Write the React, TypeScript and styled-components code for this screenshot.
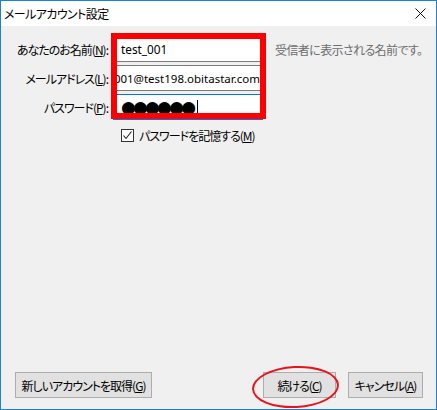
import React from "react";
import styled, { createGlobalStyle } from "styled-components";

const Global = createGlobalStyle`
  html, body { margin: 0; padding: 0; background: #ffffff; }
  * { box-sizing: border-box; }
`;

const jp = `"Noto Sans CJK JP", "Noto Sans", sans-serif`;

const Window = styled.div`
  width: 437px;
  height: 410px;
  border: 1px solid #1883d7;
  display: flex;
  flex-direction: column;
  font-family: ${jp};
  font-feature-settings: "palt";
  font-size: 12px;
  letter-spacing: -1px;
  color: #000;
`;

const TitleBar = styled.div`
  height: 25px;
  background: #ffffff;
  display: flex;
  align-items: center;
  justify-content: space-between;
  padding: 0 10px 1px 3px;
`;

const Title = styled.span`
  font-size: 12px;
  letter-spacing: -0.6px;
`;

const Body = styled.div`
  flex: 1;
  background: #f0f0f0;
  position: relative;
  display: flex;
  flex-direction: column;
`;

const Form = styled.div`
  display: grid;
  grid-template-columns: 112px 150px 1fr;
  grid-auto-rows: 26px;
  row-gap: 3px;
  padding-top: 10px;
`;

const Label = styled.div`
  display: flex;
  align-items: center;
  justify-content: flex-end;
  padding-right: 5px;
  white-space: nowrap;
`;

const Field = styled.div<{ $focused?: boolean }>`
  background: #ffffff;
  border: 1px solid ${(p) => (p.$focused ? "#0078d7" : "#7a7a7a")};
  display: flex;
  align-items: center;
  overflow: hidden;
  padding: 0 5px 0 7px;
  font-family: "Noto Sans", sans-serif;
  font-size: 11.8px;
  letter-spacing: 0;
  white-space: nowrap;
`;

const ScrolledField = styled(Field)`
  justify-content: flex-end;
  padding: 0 2px 0 1px;
  font-size: 11.5px;
`;

const Dots = styled.span`
  font-family: "DejaVu Sans", sans-serif;
  font-size: 17px;
  letter-spacing: -2.8px;
  line-height: 1;
`;

const Caret = styled.span`
  display: inline-block;
  width: 1px;
  height: 15px;
  background: #000;
  margin-left: 4px;
`;

const Hint = styled.div`
  display: flex;
  align-items: center;
  padding-left: 12px;
  color: #6d6d6d;
  letter-spacing: -0.6px;
  white-space: nowrap;
`;

const CheckRow = styled.label`
  display: flex;
  align-items: center;
  gap: 5px;
  margin: 9px 0 0 120px;
  height: 13px;
`;

const Box = styled.span`
  width: 13px;
  height: 13px;
  border: 1px solid #333333;
  background: #ffffff;
  display: flex;
  align-items: center;
  justify-content: center;
`;

const Footer = styled.div`
  margin-top: auto;
  display: flex;
  align-items: center;
  gap: 12px;
  padding: 0 13px 11px 14px;
`;

const Button = styled.div<{ $w: number }>`
  width: ${(p) => p.$w}px;
  height: 26px;
  background: #e1e1e1;
  border: 1px solid #adadad;
  display: flex;
  align-items: center;
  justify-content: center;
  white-space: nowrap;
`;

const Spacer = styled.div`
  flex: 1;
`;

const RedBox = styled.div`
  position: absolute;
  left: 110px;
  top: 7px;
  width: 155px;
  height: 86px;
  border: 6px solid #ff0000;
  pointer-events: none;
`;

const RedEllipse = styled.div`
  position: absolute;
  left: 251px;
  top: 340px;
  width: 87px;
  height: 42px;
  border: 2.5px solid #e8141c;
  border-radius: 50%;
  transform: rotate(-3deg);
  pointer-events: none;
`;

export default function App() {
  return (
    <>
      <Global />
      <Window>
        <TitleBar>
          <Title>メールアカウント設定</Title>
          <svg width="11" height="11" viewBox="0 0 11 11">
            <path d="M0.5 0.5 L10.5 10.5 M10.5 0.5 L0.5 10.5" stroke="#111" strokeWidth="1" />
          </svg>
        </TitleBar>
        <Body>
          <Form>
            <Label>
              あなたのお名前(<u>N</u>):
            </Label>
            <Field>test_001</Field>
            <Hint>受信者に表示される名前です。</Hint>
            <Label>
              メールアドレス(<u>L</u>):
            </Label>
            <ScrolledField>001@test198.obitastar.com</ScrolledField>
            <div />
            <Label>
              パスワード(<u>P</u>):
            </Label>
            <Field $focused>
              <Dots>●●●●●●</Dots>
              <Caret />
            </Field>
            <div />
          </Form>
          <CheckRow>
            <Box>
              <svg width="11" height="11" viewBox="0 0 11 11">
                <path d="M1.5 5.5 L4 8.5 L9.5 1.5" stroke="#222" strokeWidth="1.1" fill="none" />
              </svg>
            </Box>
            <span>
              パスワードを記憶する(<u>M</u>)
            </span>
          </CheckRow>
          <Footer>
            <Button $w={137}>
              新しいアカウントを取得(<u>G</u>)
            </Button>
            <Spacer />
            <Button $w={73}>
              続ける(<u>C</u>)
            </Button>
            <Button $w={75}>
              キャンセル(<u>A</u>)
            </Button>
          </Footer>
          <RedBox />
          <RedEllipse />
        </Body>
      </Window>
    </>
  );
}
